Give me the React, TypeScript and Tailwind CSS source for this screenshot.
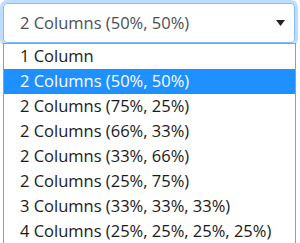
import React from 'react';

const options = [
  '1 Column',
  '2 Columns (50%, 50%)',
  '2 Columns (75%, 25%)',
  '2 Columns (66%, 33%)',
  '2 Columns (33%, 66%)',
  '2 Columns (25%, 75%)',
  '3 Columns (33%, 33%, 33%)',
  '4 Columns (25%, 25%, 25%, 25%)',
];

export default function App() {
  const selected = 1;
  return (
    <div className="w-[300px] h-[243px] overflow-hidden bg-white font-['Open_Sans',sans-serif] text-[16.5px]">
      <div className="pt-[3px] pl-[3px]">
        <div className="w-[292px] h-[40px] flex items-center justify-between pl-4 pr-[9px] border border-[#80bdff] rounded-[4px] shadow-[0_0_0_3px_rgba(0,123,255,0.25)] text-[#495057]">
          <span>{options[selected]}</span>
          <svg width="9" height="6" viewBox="0 0 9 6">
            <path d="M0 0h9L4.5 6z" fill="#222" />
          </svg>
        </div>
      </div>
      <div className="ml-[3px] w-[293px] border border-[#7f9fd6] bg-white">
        {options.map((o, i) => (
          <div
            key={o}
            className={`h-[25px] flex items-center pl-4 ${
              i === selected ? 'bg-[#1e90ff] text-white' : 'text-[#1a1a1a]'
            }`}
          >
            {o}
          </div>
        ))}
      </div>
    </div>
  );
}
